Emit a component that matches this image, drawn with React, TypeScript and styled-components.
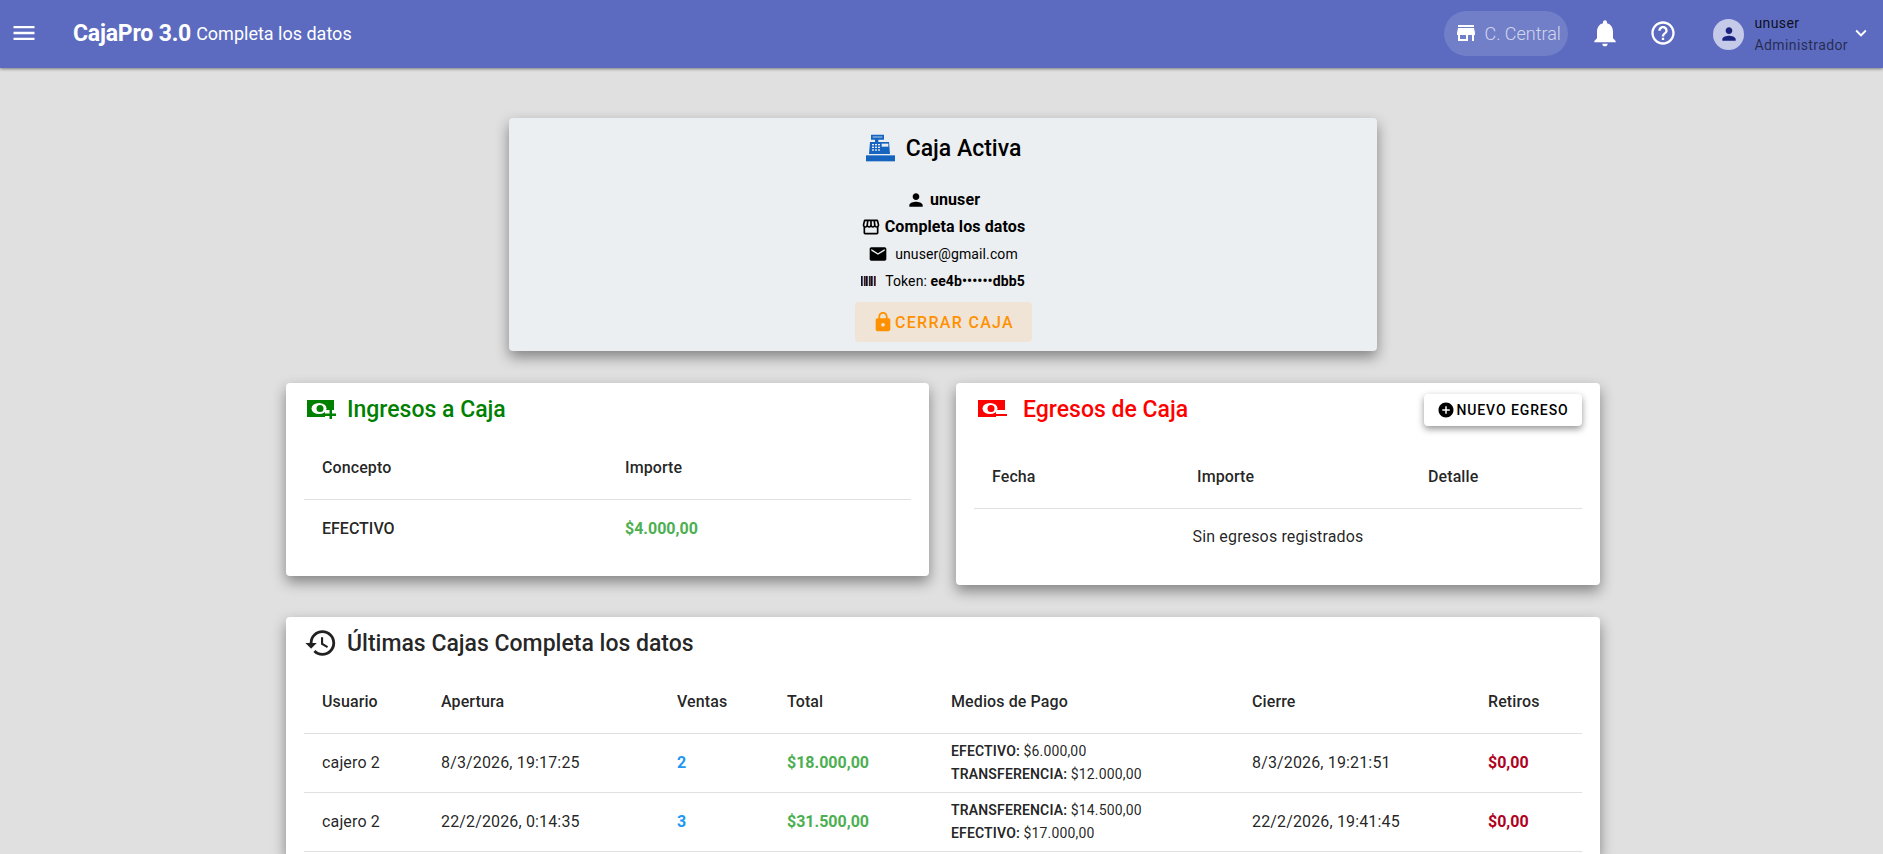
import styled, { createGlobalStyle } from 'styled-components';
import {
  MdMenu,
  MdStore,
  MdNotifications,
  MdHelpOutline,
  MdPerson,
  MdExpandMore,
  MdOutlineStorefront,
  MdEmail,
  MdLock,
  MdAddCircle,
  MdHistory,
} from 'react-icons/md';

const GlobalStyle = createGlobalStyle`
  html, body {
    margin: 0;
    height: 100%;
    overflow: hidden;
    background: #e0e0e0;
    font-family: Roboto, "Liberation Sans", sans-serif;
    color: rgba(0, 0, 0, 0.87);
  }
`;

const Page = styled.div`
  display: flex;
  flex-direction: column;
  height: 854px;
  overflow: hidden;
`;

const AppBar = styled.header`
  flex: none;
  height: 68px;
  box-sizing: border-box;
  background: #5c6bc0;
  display: flex;
  align-items: center;
  padding: 0 11px 2px 10px;
  box-shadow: 0 1px 3px rgba(0, 0, 0, 0.45);
  position: relative;
  z-index: 2;
  color: #fff;
`;

const IconSlot = styled.span`
  display: inline-flex;
  font-size: 28px;
  color: #fff;
`;

const Brand = styled.span`
  margin-left: 35px;
  font-size: 23px;
  font-weight: 700;
  letter-spacing: -0.2px;
`;

const BrandSub = styled.span`
  margin-left: 5px;
  font-size: 18px;
`;

const Spacer = styled.div`
  flex: 1;
`;

const StoreChip = styled.div`
  display: flex;
  align-items: center;
  gap: 6px;
  width: 124px;
  height: 45px;
  box-sizing: border-box;
  padding-left: 10px;
  border-radius: 23px;
  background: rgba(255, 255, 255, 0.13);
  color: rgba(255, 255, 255, 0.7);
  font-size: 18px;
  font-weight: 300;
  white-space: nowrap;
`;

const BarIcon = styled.span<{ $left: number; $size: number }>`
  display: inline-flex;
  margin-left: ${(props) => props.$left}px;
  font-size: ${(props) => props.$size}px;
  color: #fff;
`;

const Avatar = styled.div`
  margin: 2px 0 0 36px;
  width: 31px;
  height: 31px;
  border-radius: 50%;
  background: #c5cae9;
  color: #1a237e;
  display: flex;
  align-items: center;
  justify-content: center;
  font-size: 20px;
`;

const UserText = styled.div`
  margin: 2px 0 0 10px;
  display: flex;
  flex-direction: column;
  gap: 5px;
  font-size: 14px;
  line-height: 17px;
  letter-spacing: 0.4px;
  color: rgba(0, 0, 0, 0.87);
`;

const UserRole = styled.span`
  color: rgba(0, 0, 0, 0.6);
`;

const Chevron = styled.span`
  display: inline-flex;
  margin-left: 2px;
  font-size: 22px;
  color: #fff;
`;

const Content = styled.main`
  flex: 1;
  display: flex;
  flex-direction: column;
  align-items: center;
  padding: 50px 283px 0 286px;
  min-height: 0;
`;

const ActiveCard = styled.section`
  width: 868px;
  height: 233px;
  flex: none;
  box-sizing: border-box;
  padding-top: 15px;
  background: #eceff1;
  border-radius: 4px;
  box-shadow: 0 6px 14px rgba(0, 0, 0, 0.42);
  display: flex;
  flex-direction: column;
  align-items: center;
`;

const ActiveTitle = styled.h2`
  margin: 0 0 23px;
  height: 30px;
  display: flex;
  align-items: center;
  gap: 10px;
  font-size: 23px;
  font-weight: 500;
  color: #000;
  white-space: nowrap;
`;

const InfoRow = styled.div<{ $strong?: boolean }>`
  display: flex;
  align-items: center;
  justify-content: center;
  gap: ${(props) => (props.$strong ? 4 : 7)}px;
  height: 27px;
  font-size: ${(props) => (props.$strong ? 16 : 14)}px;
  font-weight: ${(props) => (props.$strong ? 700 : 400)};
  letter-spacing: 0.1px;
  color: #000;
`;

const InfoIcon = styled.span`
  display: inline-flex;
  font-size: 20px;
`;

const Barcode = styled.span`
  display: inline-block;
  width: 15px;
  height: 10px;
  margin-right: 2px;
  background: repeating-linear-gradient(
    90deg,
    #111 0 1px,
    #4a4f78 1px 2px,
    #c9cdd6 2px 3px,
    #222 3px 4px,
    #7a4a50 4px 5px
  );
`;

const CloseButton = styled.button`
  margin-top: 8px;
  width: 177px;
  height: 40px;
  border: 0;
  border-radius: 4px;
  background: #f0e4d6;
  color: #ff9100;
  font: 500 16px Roboto, sans-serif;
  letter-spacing: 1.3px;
  display: flex;
  align-items: center;
  justify-content: center;
  gap: 1px;
`;

const Columns = styled.div`
  flex: none;
  width: 100%;
  margin-top: 32px;
  display: grid;
  grid-template-columns: 643px 644px;
  column-gap: 27px;
  align-items: start;
`;

const Card = styled.section<{ $height: number }>`
  height: ${(props) => props.$height}px;
  box-sizing: border-box;
  padding: 0 18px;
  background: #fff;
  border-radius: 4px;
  box-shadow: 0 6px 14px rgba(0, 0, 0, 0.42);
`;

const CardHeader = styled.div<{ $gap: number; $inset?: number }>`
  height: 52px;
  display: flex;
  align-items: center;
  gap: ${(props) => props.$gap}px;
  padding-left: ${(props) => props.$inset ?? 0}px;
`;

const CardTitle = styled.h3<{ $color: string }>`
  margin: 0;
  font-size: 23px;
  font-weight: 500;
  color: ${(props) => props.$color};
  white-space: nowrap;
`;

const NewButton = styled.button`
  margin: 2px 0 0 auto;
  width: 158px;
  height: 32px;
  border: 0;
  border-radius: 4px;
  background: #fff;
  box-shadow: 0 3px 7px rgba(0, 0, 0, 0.42);
  color: #000;
  font: 500 14px Roboto, sans-serif;
  letter-spacing: 0.9px;
  display: flex;
  align-items: center;
  justify-content: center;
  gap: 1px;
  white-space: nowrap;
`;

const TableCard = styled.section`
  flex: 1;
  width: 100%;
  margin-top: 32px;
  box-sizing: border-box;
  padding: 0 18px;
  background: #fff;
  border-radius: 4px 4px 0 0;
  box-shadow: 0 6px 14px rgba(0, 0, 0, 0.42);
`;

const Table = styled.table`
  width: 100%;
  table-layout: fixed;
  border-collapse: collapse;
  font-size: 16px;
  color: rgba(0, 0, 0, 0.87);
`;

const Col = styled.col<{ $width: number }>`
  width: ${(props) => props.$width}px;
`;

const Th = styled.th<{ $height: number; $top?: number }>`
  height: ${(props) => props.$height}px;
  padding: ${(props) => props.$top ?? 2}px 0 0 18px;
  box-sizing: border-box;
  text-align: left;
  font-weight: 500;
  letter-spacing: 0.1px;
  border-bottom: 1px solid #e0e0e0;
`;

const Td = styled.td<{ $height?: number; $color?: string; $weight?: number }>`
  height: ${(props) => props.$height ?? 58}px;
  padding: 0 0 0 18px;
  font-weight: ${(props) => props.$weight ?? 400};
  letter-spacing: ${(props) => (props.$weight ? 0 : 0.15)}px;
  color: ${(props) => props.$color ?? 'inherit'};
  border-bottom: ${(props) => (props.$height ? 0 : '1px solid #e0e0e0')};
  white-space: nowrap;
`;

const EmptyCell = styled.td`
  height: 58px;
  padding-bottom: 3px;
  box-sizing: border-box;
  text-align: center;
  letter-spacing: 0.15px;
`;

const PayLine = styled.div`
  font-size: 14px;
  line-height: 22.5px;
  letter-spacing: 0.15px;
`;

const PayName = styled.strong`
  font-weight: 600;
`;

const ingresosCols = [303, 304];
const egresosCols = [205, 231, 172];
const historyCols = [119, 236, 110, 164, 301, 236, 112];

const rows = [
  {
    usuario: 'cajero 2',
    apertura: '8/3/2026, 19:17:25',
    ventas: '2',
    total: '$18.000,00',
    medios: [
      ['EFECTIVO', '$6.000,00'],
      ['TRANSFERENCIA', '$12.000,00'],
    ],
    cierre: '8/3/2026, 19:21:51',
    retiros: '$0,00',
  },
  {
    usuario: 'cajero 2',
    apertura: '22/2/2026, 0:14:35',
    ventas: '3',
    total: '$31.500,00',
    medios: [
      ['TRANSFERENCIA', '$14.500,00'],
      ['EFECTIVO', '$17.000,00'],
    ],
    cierre: '22/2/2026, 19:41:45',
    retiros: '$0,00',
  },
];

// caja registradora: visor arriba, cuerpo con teclas y base
const RegisterIcon = () => (
  <svg width="31" height="28" viewBox="15 18 93 84" fill="#1565c0">
    <path d="M33 20h39v15H55v7H45v-7H33z" />
    <rect x="38" y="25" width="29" height="4" fill="#90b4e0" />
    <path d="M30 42h57l3 36H27z" />
    <rect x="65" y="47" width="20" height="9" fill="#eceff1" />
    {[36, 45, 54].map((x) =>
      [48, 56, 64].map((y) => <rect key={`${x}-${y}`} x={x} y={y} width="6" height="4" fill="#eceff1" />),
    )}
    <rect x="18" y="82" width="87" height="18" />
  </svg>
);

// billete con el signo de mas / menos en la esquina
const MoneyIcon = ({ color, minus }: { color: string; minus?: boolean }) => (
  <svg width="30" height="20" viewBox="0 0 30 20">
    <rect x="0" y="1" width="27" height="17" fill={color} />
    <ellipse cx="12" cy="9.5" rx="7.5" ry="5.5" fill="#fff" />
    <circle cx="13" cy="9.5" r="3.5" fill={color} />
    <rect x="18" y="11" width="12" height="9" fill="#fff" />
    {minus ? (
      <rect x="18" y="15" width="11" height="2" fill={color} />
    ) : (
      <path d="M22.5 11h2.5v3.5h4V17h-4v3h-2.5v-3H18v-2.5h4.5z" fill={color} />
    )}
  </svg>
);

export default function App() {
  return (
    <Page>
      <GlobalStyle />
      <AppBar>
        <IconSlot>
          <MdMenu />
        </IconSlot>
        <Brand>CajaPro 3.0</Brand>
        <BrandSub>Completa los datos</BrandSub>
        <Spacer />
        <StoreChip>
          <MdStore size={24} color="#fff" />
          C. Central
        </StoreChip>
        <BarIcon $left={21} $size={32}>
          <MdNotifications />
        </BarIcon>
        <BarIcon $left={28} $size={28}>
          <MdHelpOutline />
        </BarIcon>
        <Avatar>
          <MdPerson />
        </Avatar>
        <UserText>
          <span>unuser</span>
          <UserRole>Administrador</UserRole>
        </UserText>
        <Chevron>
          <MdExpandMore />
        </Chevron>
      </AppBar>

      <Content>
        <ActiveCard>
          <ActiveTitle>
            <RegisterIcon />
            Caja Activa
          </ActiveTitle>
          <InfoRow $strong>
            <InfoIcon>
              <MdPerson />
            </InfoIcon>
            unuser
          </InfoRow>
          <InfoRow $strong>
            <InfoIcon>
              <MdOutlineStorefront />
            </InfoIcon>
            Completa los datos
          </InfoRow>
          <InfoRow>
            <InfoIcon>
              <MdEmail />
            </InfoIcon>
            unuser@gmail.com
          </InfoRow>
          <InfoRow>
            <Barcode />
            <span>
              Token: <b>ee4b••••••dbb5</b>
            </span>
          </InfoRow>
          <CloseButton>
            <MdLock size={22} />
            CERRAR CAJA
          </CloseButton>
        </ActiveCard>

        <Columns>
          <Card $height={193}>
            <CardHeader $gap={10} $inset={3}>
              <MoneyIcon color="#008000" />
              <CardTitle $color="#008000">Ingresos a Caja</CardTitle>
            </CardHeader>
            <Table>
              <colgroup>
                {ingresosCols.map((w) => (
                  <Col key={w} $width={w} />
                ))}
              </colgroup>
              <thead>
                <tr>
                  <Th $height={64}>Concepto</Th>
                  <Th $height={64}>Importe</Th>
                </tr>
              </thead>
              <tbody>
                <tr>
                  <Td $height={57} $weight={500}>
                    EFECTIVO
                  </Td>
                  <Td $height={57} $weight={700} $color="#4caf50">
                    $4.000,00
                  </Td>
                </tr>
              </tbody>
            </Table>
          </Card>

          <Card $height={202}>
            <CardHeader $gap={15} $inset={4}>
              <MoneyIcon color="#ff0000" minus />
              <CardTitle $color="#ff0000">Egresos de Caja</CardTitle>
              <NewButton>
                <MdAddCircle size={18} />
                NUEVO EGRESO
              </NewButton>
            </CardHeader>
            <Table>
              <colgroup>
                {egresosCols.map((w) => (
                  <Col key={w} $width={w} />
                ))}
              </colgroup>
              <thead>
                <tr>
                  <Th $height={73} $top={11}>
                    Fecha
                  </Th>
                  <Th $height={73} $top={11}>
                    Importe
                  </Th>
                  <Th $height={73} $top={11}>
                    Detalle
                  </Th>
                </tr>
              </thead>
              <tbody>
                <tr>
                  <EmptyCell colSpan={3}>Sin egresos registrados</EmptyCell>
                </tr>
              </tbody>
            </Table>
          </Card>
        </Columns>

        <TableCard>
          <CardHeader $gap={9}>
            <MdHistory size={34} color="#212121" />
            <CardTitle $color="rgba(0, 0, 0, 0.87)">Últimas Cajas Completa los datos</CardTitle>
          </CardHeader>
          <Table>
            <colgroup>
              {historyCols.map((w, i) => (
                <Col key={i} $width={w} />
              ))}
            </colgroup>
            <thead>
              <tr>
                <Th $height={64}>Usuario</Th>
                <Th $height={64}>Apertura</Th>
                <Th $height={64}>Ventas</Th>
                <Th $height={64}>Total</Th>
                <Th $height={64}>Medios de Pago</Th>
                <Th $height={64}>Cierre</Th>
                <Th $height={64}>Retiros</Th>
              </tr>
            </thead>
            <tbody>
              {rows.map((row) => (
                <tr key={row.apertura}>
                  <Td>{row.usuario}</Td>
                  <Td>{row.apertura}</Td>
                  <Td $weight={700} $color="#2196f3">
                    {row.ventas}
                  </Td>
                  <Td $weight={700} $color="#4caf50">
                    {row.total}
                  </Td>
                  <Td>
                    {row.medios.map(([name, value]) => (
                      <PayLine key={name}>
                        <PayName>{name}:</PayName> {value}
                      </PayLine>
                    ))}
                  </Td>
                  <Td>{row.cierre}</Td>
                  <Td $weight={700} $color="#b00020">
                    {row.retiros}
                  </Td>
                </tr>
              ))}
            </tbody>
          </Table>
        </TableCard>
      </Content>
    </Page>
  );
}
